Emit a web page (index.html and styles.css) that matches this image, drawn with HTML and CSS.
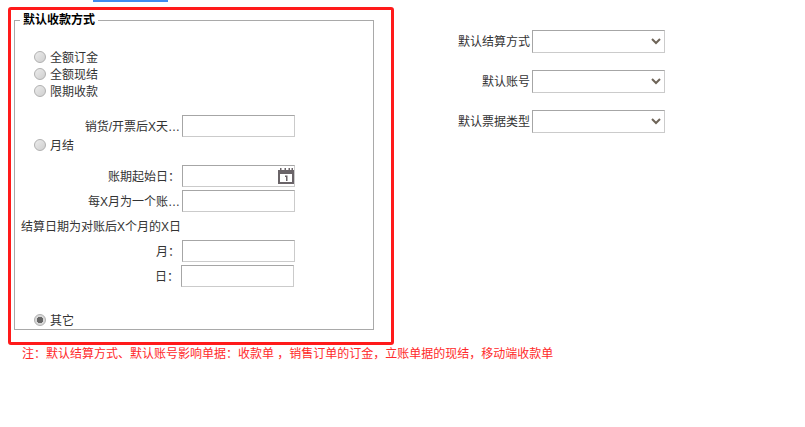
FILE: index.html
```html
<!DOCTYPE html>
<html lang="zh-CN">
<head>
    <meta charset="UTF-8">
    <title>默认收款方式</title>
    <link rel="stylesheet" href="styles.css">
</head>
<body>
    <div class="tab-mark"></div>

    <div class="page">
        <div class="highlight">
            <fieldset class="pay-set">
                <legend>默认收款方式</legend>

                <label class="radio-row first"><input type="radio" name="pay"><span>全额订金</span></label>
                <label class="radio-row"><input type="radio" name="pay"><span>全额现结</span></label>
                <label class="radio-row"><input type="radio" name="pay"><span>限期收款</span></label>

                <div class="field gap-limit">
                    <span class="field-label">销货/开票后X天…</span>
                    <input class="text-input" type="text">
                </div>

                <label class="radio-row monthly"><input type="radio" name="pay"><span>月结</span></label>

                <div class="field gap-month">
                    <span class="field-label">账期起始日：</span>
                    <span class="date-wrap">
                        <input class="text-input" type="text">
                        <svg class="date-icon" width="16" height="16" viewBox="0 0 16 16">
                            <path fill="#6a6468" d="M0 2h2V0h1.500v2h3V0H8v2h2.500V0H12v2h1.500V0H15v2h1v14H0z"/>
                            <rect x="2" y="6" width="12" height="8" fill="#fff"/>
                            <path fill="#6a6468" d="M7 7.500h2.500V13H8V9H7z"/>
                        </svg>
                    </span>
                </div>

                <div class="field gap-cycle">
                    <span class="field-label">每X月为一个账…</span>
                    <input class="text-input" type="text">
                </div>

                <div class="settle-note">结算日期为对账后X个月的X日</div>

                <div class="field">
                    <span class="field-label">月：</span>
                    <input class="text-input" type="text">
                </div>

                <div class="field gap-day">
                    <span class="field-label">日：</span>
                    <input class="text-input" type="text">
                </div>

                <label class="radio-row last"><input type="radio" name="pay" checked><span>其它</span></label>
            </fieldset>
        </div>

        <div class="defaults">
            <label class="default-row">
                <span class="default-label">默认结算方式</span>
                <span class="select-wrap">
                    <select></select>
                    <svg class="select-arrow" width="10" height="7" viewBox="0 0 10 7"><path d="M1 1l4 4 4-4" fill="none" stroke="#6e6458" stroke-width="2"/></svg>
                </span>
            </label>
            <label class="default-row">
                <span class="default-label">默认账号</span>
                <span class="select-wrap">
                    <select></select>
                    <svg class="select-arrow" width="10" height="7" viewBox="0 0 10 7"><path d="M1 1l4 4 4-4" fill="none" stroke="#6e6458" stroke-width="2"/></svg>
                </span>
            </label>
            <label class="default-row">
                <span class="default-label">默认票据类型</span>
                <span class="select-wrap">
                    <select></select>
                    <svg class="select-arrow" width="10" height="7" viewBox="0 0 10 7"><path d="M1 1l4 4 4-4" fill="none" stroke="#6e6458" stroke-width="2"/></svg>
                </span>
            </label>
        </div>
    </div>

    <p class="note">注：默认结算方式、默认账号影响单据：收款单 ，销售订单的订金，立账单据的现结，移动端收款单</p>
</body>
</html>
```

FILE: styles.css
```css
* {
    box-sizing: border-box;
}

body {
    margin: 0;
    background: #fff;
    color: #333;
    font-family: "Liberation Sans", "Noto Sans CJK SC", sans-serif;
    font-size: 12px;
    line-height: 17px;
}

.tab-mark {
    width: 75px;
    height: 2px;
    margin-left: 93px;
    background: #3f8cf0;
}

.page {
    display: flex;
    align-items: flex-start;
    margin: 5px 0 0 8px;
}

.highlight {
    width: 386px;
    padding: 2px 17px 12px 3px;
    border: 3px solid #ff1a1a;
    border-radius: 3px;
}

.pay-set {
    margin: 0;
    padding: 0 0 1px;
    border: 1px solid #a9a9a9;
    min-width: 0;
}

.pay-set legend {
    margin-left: 5px;
    padding: 0 3px;
    color: #000;
    font-weight: bold;
    line-height: 16px;
}

.radio-row {
    display: flex;
    align-items: center;
    gap: 4px;
    height: 17px;
    padding-left: 19px;
}

.radio-row span {
    padding-top: 4px;
}

.radio-row.first {
    margin-top: 20px;
}

.radio-row.monthly {
    margin-top: -1px;
}

.radio-row.last {
    margin-top: 24px;
}

.radio-row input {
    appearance: none;
    width: 12px;
    height: 12px;
    margin: 0;
    border: 1px solid #b0b0b0;
    border-radius: 50%;
    background: linear-gradient(135deg, #ececec, #cfcfcf);
}

.radio-row input:checked {
    background: radial-gradient(circle, #666 0 3px, #d8d8d8 3.500px);
}

.field {
    display: flex;
    align-items: center;
    gap: 2px;
}

.field-label {
    width: 165px;
    padding-top: 2px;
    text-align: right;
}

.text-input {
    display: block;
    width: 113px;
    height: 22px;
    padding: 0 4px;
    border: 1px solid;
    border-color: #a6a6a6 #cbcbcb #cbcbcb #a6a6a6;
    background: #fff;
}

.gap-limit {
    margin-top: 16px;
}

.gap-month {
    margin-top: 12px;
}

.gap-cycle {
    margin-top: 3px;
}

.gap-day {
    margin-top: 3px;
    margin-left: -1px;
}

.date-wrap {
    position: relative;
    display: block;
}

.date-icon {
    position: absolute;
    top: 3px;
    right: 1px;
}

.settle-note {
    margin: 7px 0 4px;
    padding-left: 6px;
}

.defaults {
    display: flex;
    flex-direction: column;
    gap: 17px;
    margin: 23px 0 0 46px;
}

.default-row {
    display: flex;
    align-items: center;
    gap: 2px;
}

.default-label {
    width: 90px;
    padding-top: 2px;
    text-align: right;
}

.select-wrap {
    position: relative;
    display: block;
}

.select-wrap select {
    display: block;
    appearance: none;
    width: 133px;
    height: 23px;
    border: 1px solid;
    border-color: #a6a6a6 #cbcbcb #cbcbcb #a6a6a6;
    border-radius: 0;
    background: #fff;
}

.select-arrow {
    position: absolute;
    top: 8px;
    right: 4px;
    pointer-events: none;
}

.note {
    margin: 1px 0 0;
    padding-left: 22px;
    color: #ff2a2a;
}
```
